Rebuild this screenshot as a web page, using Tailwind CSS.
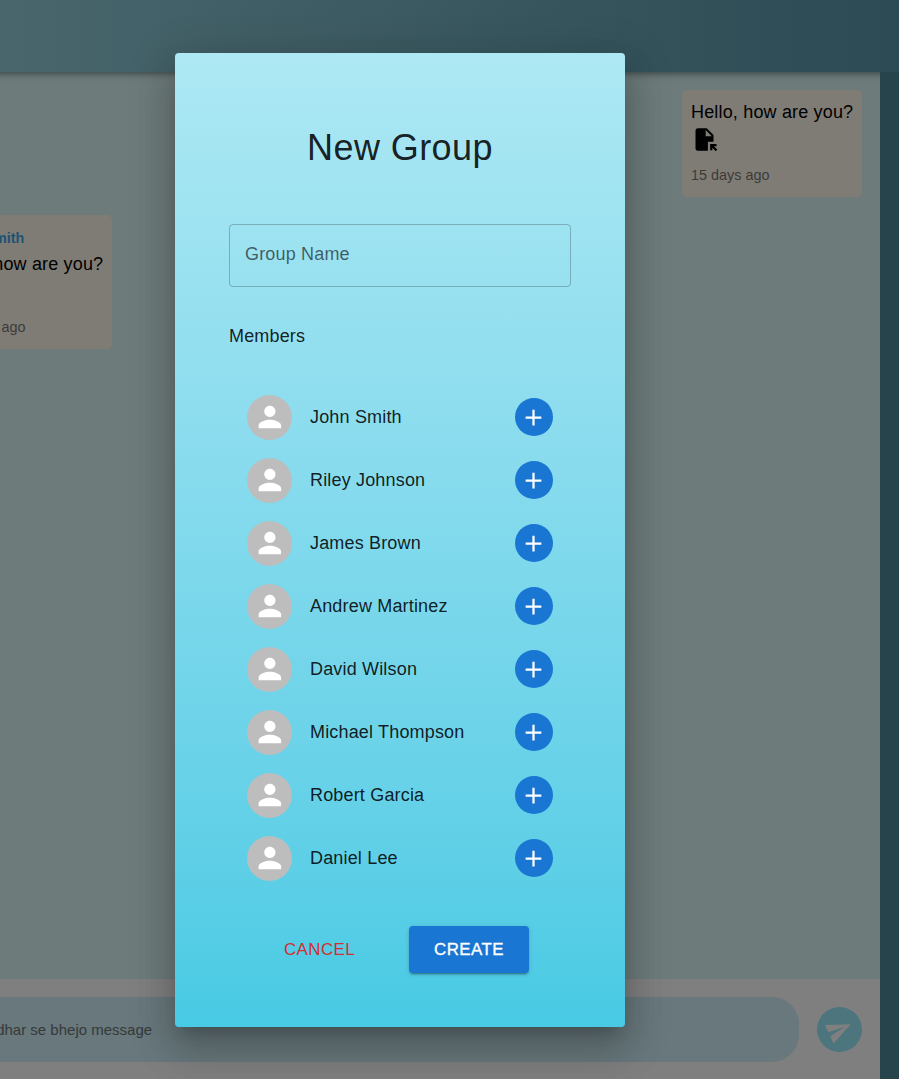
<!DOCTYPE html>
<html lang="en">
<head>
<meta charset="utf-8">
<title>New Group</title>
<script src="https://cdn.jsdelivr.net/npm/@tailwindcss/browser@4"></script>
</head>
<body class="relative h-[1079px] w-[899px] overflow-hidden bg-[#27434c] font-['Liberation_Sans',sans-serif] text-[18px] leading-[27px] tracking-[0.00938em]">
<svg class="hidden">
  <symbol id="person" viewBox="0 0 24 24"><path d="M12 12c2.21 0 4-1.79 4-4s-1.79-4-4-4-4 1.79-4 4 1.79 4 4 4zm0 2c-2.67 0-8 1.34-8 4v2h16v-2c0-2.66-5.33-4-8-4z"/></symbol>
  <symbol id="add" viewBox="0 0 24 24"><path d="M19 13h-6v6h-2v-6H5v-2h6V5h2v6h6v2z"/></symbol>
  <symbol id="file" viewBox="0 0 24 24"><path d="M14 2H6c-1.1 0-1.99.9-1.99 2L4 20c0 1.1.89 2 1.99 2H15v-8h5V8l-6-6zm-1 7V3.5L18.5 9H13zm4 12.66V16h5.66v2h-2.24l2.95 2.95-1.41 1.41L19 19.41v2.24h-2z"/></symbol>
  <symbol id="send" viewBox="0 0 24 24"><path d="M2.01 21 23 12 2.01 3 2 10l15 2-15 2z"/></symbol>
</svg>

<div class="flex h-full flex-col">
  <header class="relative z-10 -mx-[20px] h-[72px] shrink-0 bg-linear-to-r from-[#49676d] to-[#2b4a53] shadow-[0_2px_4px_-1px_rgba(0,0,0,0.2),0_4px_5px_0_rgba(0,0,0,0.14),0_1px_10px_0_rgba(0,0,0,0.12)]"></header>
  <div class="flex grow">
    <div class="flex w-[880px] shrink-0 flex-col">
      <main class="flex grow flex-col bg-[#6d7b7b] pt-[18px] pr-[18px]">
        <div class="h-[107px] w-[180px] self-end rounded-[5px] bg-[#7f7c76] px-[9px] pt-[9px] text-black">
          <p class="whitespace-nowrap">Hello, how are you?</p>
          <svg class="h-[27px] w-[27px] fill-black"><use href="#file"/></svg>
          <p class="mt-[11px] text-[14.4px] leading-[22px] tracking-normal text-[#3c3b38]">15 days ago</p>
        </div>
        <div class="mt-[18px] -ml-[68px] h-[134px] w-[180px] rounded-[5px] bg-[#7f7c76] px-[9px] pt-[12px] text-black">
          <p class="ml-[5px] text-[14.4px] leading-[22px] font-bold tracking-normal text-[#1e5372]">John Smith</p>
          <p class="mt-[2px] whitespace-nowrap">Hello, how are you?</p>
          <svg class="h-[27px] w-[27px] fill-black"><use href="#file"/></svg>
          <p class="mt-[11px] ml-[6px] text-[14.4px] leading-[22px] tracking-normal text-[#3c3b38]">15 days ago</p>
        </div>
      </main>
      <footer class="flex h-[100px] shrink-0 items-start gap-[18px] bg-[#807f7f] pt-[18px] pr-[18px]">
        <div class="-ml-[20px] flex h-[65px] grow items-center rounded-r-[27px] bg-[#68787c] pl-[12px] text-[15px] tracking-normal text-[#36393a]">Idhar se bhejo message</div>
        <div class="mt-[10px] flex size-[45px] items-center justify-center rounded-full bg-[#4c757d]">
          <svg class="h-[27px] w-[27px] -rotate-25 overflow-visible fill-[#807f7f]"><use href="#send"/></svg>
        </div>
      </footer>
    </div>
    <aside class="relative z-10 grow bg-[#27434c]"></aside>
  </div>
</div>

<section class="absolute top-[53px] left-[175px] z-20 flex h-[974px] w-[450px] flex-col rounded-[4px] bg-linear-to-b from-[#ade8f4] to-[#48cae4] px-[54px] text-black/87 shadow-[0_11px_15px_-7px_rgba(0,0,0,0.2),0_24px_38px_3px_rgba(0,0,0,0.14),0_9px_46px_8px_rgba(0,0,0,0.12)]">
  <h2 class="mt-[66px] text-center text-[36px] leading-[58px] tracking-[0.012em]">New Group</h2>
  <div class="mt-[47px] flex h-[63px] shrink-0 items-center rounded-[4px] border border-black/23 px-[15px] pb-[3px] text-black/60">Group Name</div>
  <p class="mt-[36px]">Members</p>
  <ul id="members" class="mt-[36px] flex flex-col px-[18px]"></ul>
  <div class="mt-[36px] flex h-[47px] shrink-0 items-center text-[16.875px]">
    <button class="ml-[42px] h-[47px] w-[97px] text-center tracking-[0.026em] text-[#d32f2f]">CANCEL</button>
    <button class="ml-[41px] h-[47px] w-[120px] rounded-[4px] bg-[#1976d2] text-center tracking-[0.02857em] text-white shadow-[0_3px_1px_-2px_rgba(0,0,0,0.2),0_2px_2px_0_rgba(0,0,0,0.14),0_1px_5px_0_rgba(0,0,0,0.12)] [-webkit-text-stroke:0.35px_white]">CREATE</button>
  </div>
</section>

<script>
  const names = ['John Smith', 'Riley Johnson', 'James Brown', 'Andrew Martinez', 'David Wilson', 'Michael Thompson', 'Robert Garcia', 'Daniel Lee'];
  document.getElementById('members').innerHTML = names.map(name => `
    <li class="flex h-[63px] items-center">
      <span class="flex size-[45px] items-center justify-center rounded-full bg-[#bdbdbd] pb-[2px]"><svg class="h-[33.75px] w-[33.75px] fill-white"><use href="#person"/></svg></span>
      <span class="ml-[18px] grow">${name}</span>
      <span class="mb-px flex size-[38px] items-center justify-center rounded-full bg-[#1976d2] pr-px"><svg class="h-[27px] w-[27px] fill-white"><use href="#add"/></svg></span>
    </li>`).join('');
</script>
</body>
</html>
